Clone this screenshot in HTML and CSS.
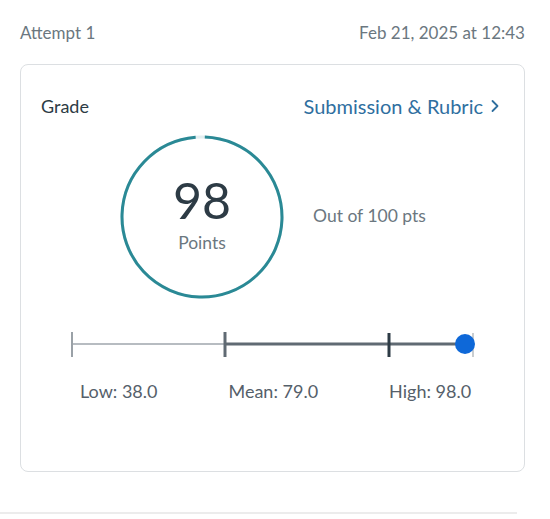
FILE: index.html
```html
<!DOCTYPE html>
<html lang="en">
<head>
  <meta charset="UTF-8">
  <meta name="viewport" content="width=device-width, initial-scale=1.0">
  <title>Attempt 1 - Grade</title>
  <link rel="stylesheet" href="styles.css">
</head>
<body>
  <div class="page">
    <div class="attempt-header">
      <span class="attempt-name">Attempt 1</span>
      <span class="attempt-date">Feb 21, 2025 at 12:43</span>
    </div>

    <div class="grade-card">
      <div class="grade-top">
        <span class="grade-title">Grade</span>
        <a class="rubric-link" href="#">Submission &amp; Rubric
          <svg class="chevron" width="10" height="14" viewBox="0 0 10 14"><path d="M2.5 2 L7.5 7 L2.5 12" fill="none" stroke="currentColor" stroke-width="1.8" stroke-linecap="round" stroke-linejoin="round"/></svg>
        </a>
      </div>

      <div class="score-row">
        <div class="score-ring">
          <svg width="166" height="166" viewBox="0 0 166 166">
            <circle cx="83" cy="83" r="80" fill="none" stroke="#e3eef0" stroke-width="3"/>
            <circle cx="83" cy="83" r="80" fill="none" stroke="#2a8995" stroke-width="3"
              stroke-dasharray="492.6 10" transform="rotate(-88 83 83)"/>
          </svg>
          <div class="score-text">
            <div class="score-value">98</div>
            <div class="score-unit">Points</div>
          </div>
        </div>
        <div class="score-total">Out of 100 pts</div>
      </div>

      <div class="spread">
        <svg width="420" height="30" viewBox="0 0 420 30">
          <line x1="10" y1="14" x2="163" y2="14" stroke="#b7bcc1" stroke-width="2"/>
          <line x1="163" y1="14" x2="403" y2="14" stroke="#606a73" stroke-width="3"/>
          <line x1="10" y1="2" x2="10" y2="27" stroke="#9aa1a7" stroke-width="2"/>
          <line x1="163" y1="2" x2="163" y2="27" stroke="#606a73" stroke-width="3"/>
          <line x1="327" y1="3" x2="327" y2="27" stroke="#2d3b45" stroke-width="3"/>
          <line x1="411" y1="3" x2="411" y2="27" stroke="#b7bcc1" stroke-width="1.5"/>
          <circle cx="403" cy="14" r="10" fill="#0e68d8"/>
        </svg>
        <div class="spread-labels">
          <span>Low: 38.0</span>
          <span>Mean: 79.0</span>
          <span>High: 98.0</span>
        </div>
      </div>
    </div>

    <div class="bottom-rule"></div>
  </div>
</body>
</html>
```

FILE: styles.css
```css
body {
  margin: 0;
  background-color: #ffffff;
  color: #2d3b45;
  font-family: 'Lato', 'Noto Sans', sans-serif;
}
.page {
  width: 550px;
  height: 519px;
  padding-top: 22px;
  box-sizing: border-box;
}
.attempt-header {
  display: flex;
  justify-content: space-between;
  margin: 0 25px 0 20px;
  font-size: 17px;
  line-height: 22px;
  color: #6b7780;
}
.grade-card {
  margin: 20px 25px 0 20px;
  height: 408px;
  box-sizing: border-box;
  border: 1.5px solid #dcdfe2;
  border-radius: 8px;
  padding: 28px 24px 0 20px;
}
.grade-top {
  display: flex;
  justify-content: space-between;
  align-items: center;
  height: 26px;
}
.grade-title {
  font-size: 18px;
  color: #2d3b45;
}
.rubric-link {
  display: flex;
  align-items: center;
  gap: 7px;
  font-size: 20px;
  color: #2f6f9f;
  text-decoration: none;
}
.score-row {
  display: flex;
  align-items: center;
  margin-top: 15px;
  margin-left: 78px;
}
.score-ring {
  position: relative;
  width: 166px;
  height: 166px;
}
.score-ring svg {
  display: block;
}
.score-text {
  position: absolute;
  top: 0;
  left: 0;
  right: 0;
  bottom: 0;
  display: flex;
  flex-direction: column;
  align-items: center;
  justify-content: center;
}
.score-value {
  font-size: 50px;
  line-height: 54px;
  color: #2d3b45;
  margin-top: -8px;
}
.score-unit {
  font-size: 17.5px;
  line-height: 20px;
  margin-top: 6px;
  color: #6b7780;
}
.score-total {
  margin-left: 28px;
  margin-top: -4px;
  font-size: 17.5px;
  color: #6b7780;
}
.spread {
  margin-top: 30px;
  margin-left: 21px;
}
.spread svg {
  display: block;
}
.spread-labels {
  display: flex;
  gap: 71px;
  margin-top: 20px;
  margin-left: 18px;
  font-size: 18px;
  color: #55606a;
}
.bottom-rule {
  margin-top: 40px;
  width: 517px;
  height: 2px;
  background-color: #ececec;
}
```
